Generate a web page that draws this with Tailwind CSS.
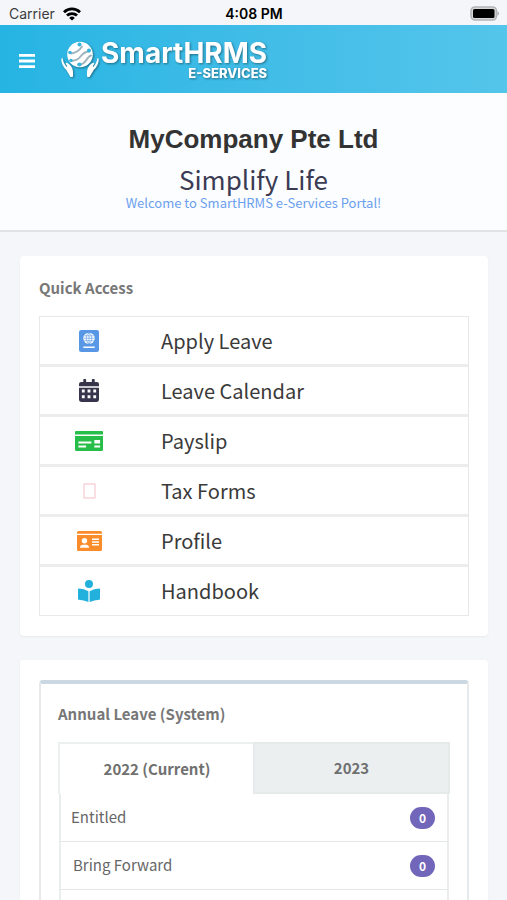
<!DOCTYPE html>
<html lang="en">
<head>
<meta charset="utf-8">
<meta name="viewport" content="width=device-width, initial-scale=1">
<title>SmartHRMS e-Services</title>
<script src="https://cdn.jsdelivr.net/npm/@tailwindcss/browser@4"></script>
</head>
<body class="bg-[#f4f6fa] font-['Noto_Sans_CJK_JP','Noto_Sans',sans-serif] text-[#666]">
<div class="h-screen overflow-hidden">
  <div class="grid h-[25px] grid-cols-3 items-center pr-2 pl-[9px] pt-[2px] font-['Inter',sans-serif] text-sm leading-5">
    <div class="flex items-center gap-2 text-[#3c3c40]">
      <span>Carrier</span>
      <svg class="h-[14px] w-[18px] text-black" viewBox="0 0 18 14" fill="none" stroke="currentColor" stroke-width="2.8" aria-hidden="true">
        <path d="M1 5.2a11.4 11.4 0 0 1 16 0"/><path d="M4 8.600a7.100 7.100 0 0 1 10 0"/><path d="M9 13.6 6.2 10.9a4 4 0 0 1 5.6 0z" fill="currentColor" stroke="none"/>
      </svg>
    </div>
    <div class="text-center font-semibold text-black">4:08 PM</div>
    <svg class="h-[15px] w-[31px] justify-self-end" viewBox="0 0 31 15" aria-hidden="true">
      <rect x="3" y="1" width="25.500" height="13" rx="4" fill="#d8d8da" stroke="#b4b4b6" stroke-width="1.600"/>
      <rect x="5" y="3" width="21.500" height="9" rx="1.500" fill="#000"/>
      <path d="M29.500 5.200q1.500 .8 1.500 2.300t-1.500 2.300z" fill="#a9a9ab"/>
    </svg>
  </div>

  <header class="flex h-[68px] items-center bg-linear-to-r from-[#25b4e3] to-[#54c5eb] pl-[19px] text-white">
    <button type="button" aria-label="Open menu" class="mt-1 w-4">
      <svg viewBox="0 0 16 14" class="w-4" fill="currentColor" aria-hidden="true"><path d="M0 0h16v2.800H0zM0 5.600h16v2.800H0zM0 11.200h16V14H0z"/></svg>
    </button>
    <a href="#" class="ml-[26px] flex items-start font-['Inter',sans-serif] font-bold drop-shadow-[1px_1px_1px_rgba(0,0,0,0.4)]">
      <svg class="mt-[2px] h-[37px] w-[38px]" viewBox="0 0 38 37" fill="#fff" aria-hidden="true">
        <circle cx="19" cy="13.500" r="12.800"/>
        <path d="M10.500 12.500Q17 11.500 21 5.500M9.500 19.500q6 1 10-4t8.500-5M17 23.500q5 .5 8-4t5-5" fill="none" stroke="#9fb4bd" stroke-width="2" stroke-linecap="round"/>
        <circle cx="18.500" cy="3.500" r="2" fill="#35b4df"/><circle cx="9" cy="11.500" r="1.800" fill="#35b4df"/><circle cx="28" cy="9.500" r="2" fill="#35b4df"/><circle cx="10" cy="19.500" r="1.700" fill="#35b4df"/><circle cx="18.500" cy="23.500" r="2" fill="#35b4df"/>
        <path d="M1.500 17q-1.500 0-1.200 2.200Q1 25 5 28.500L9.500 36h2.300q1-7-1.600-10.500-3-4-5.200-3.700-.9.800 1.200 3.200l-.4 1Q2.600 23 1.500 17z"/>
        <path d="M36.500 17q1.500 0 1.200 2.200Q37 25 33 28.500L28.500 36h-2.300q-1-7 1.600-10.500 3-4 5.200-3.700.9.800-1.200 3.200l.4 1q3.200-3 4.300-9z"/>
      </svg>
      <span class="ml-[2px] flex flex-col items-end">
        <span class="text-[28px] leading-7">SmartHRMS</span>
        <span class="text-[13px] leading-[13px] font-extrabold">E-SERVICES</span>
      </span>
    </a>
  </header>

  <section class="flex h-[139px] flex-col items-center border-b-2 border-[#dfe3e5] bg-[#fbfdfe] pt-[30px] text-center">
    <h1 class="font-['Liberation_Sans',sans-serif] text-[26px] leading-8 font-bold text-[#333]">MyCompany Pte Ltd</h1>
    <p class="mt-[8px] text-[26px] leading-8 text-[#3b3b54]">Simplify Life</p>
    <p class="text-[13px] leading-4 text-[#6b9fee]">Welcome to SmartHRMS e-Services Portal!</p>
  </section>

  <main class="flex flex-col gap-6 px-5 pt-6">
    <section class="-mr-px rounded-sm bg-white px-[19px] pt-5 pb-5 shadow-xs">
      <h2 class="mb-4 text-[15px] leading-6 font-bold text-[#777]">Quick Access</h2>
      <nav class="border border-[#e8e8e8] text-xl text-[#3a3a3a]">
        <a href="#" class="flex h-[50px] items-center border-b-3 border-[#ededed]">
          <span class="mr-[23px] flex w-[98px] justify-center"><svg class="h-[22px] w-5" viewBox="0 0 448 512" preserveAspectRatio="none" fill="#5896e6" aria-hidden="true"><rect width="448" height="512" rx="48"/><circle cx="224" cy="192" r="128" fill="#fff"/><path d="M104 192h240M224 70v244M120 135h208M120 249h208" stroke="#5896e6" stroke-width="14"/><ellipse cx="224" cy="192" rx="60" ry="122" fill="none" stroke="#5896e6" stroke-width="14"/><path d="M96 384h256v34H96z" fill="#fff"/></svg></span>
          <span>Apply Leave</span></a>
        <a href="#" class="flex h-[50px] items-center border-b-3 border-[#ededed]">
          <span class="mr-[23px] flex w-[98px] justify-center"><svg class="h-[23px] w-5" viewBox="0 0 448 512" fill="#36354c" aria-hidden="true"><path fill-rule="evenodd" d="M0 464a48 48 0 0 0 48 48h352a48 48 0 0 0 48-48V192H0zM320 236h64v64h-64zm0 128h64v64h-64zM192 236h64v64h-64zm0 128h64v64h-64zM64 236h64v64H64zm0 128h64v64H64zM400 64h-48V16a16 16 0 0 0-16-16h-32a16 16 0 0 0-16 16v48H160V16a16 16 0 0 0-16-16h-32a16 16 0 0 0-16 16v48H48a48 48 0 0 0-48 48v48h448v-48a48 48 0 0 0-48-48z"/></svg></span>
          <span>Leave Calendar</span></a>
        <a href="#" class="flex h-[50px] items-center border-b-3 border-[#ededed]">
          <span class="mr-[23px] flex w-[98px] justify-center"><svg class="h-5 w-[28px]" viewBox="0 0 29 20" preserveAspectRatio="none" fill="#27bd49" aria-hidden="true"><path fill-rule="evenodd" d="M1 0h27q1 0 1 1v2.500H0V1q0-1 1-1zM0 5h29v13.500q0 1.500-1.500 1.500h-26Q0 20 0 18.500zM3.500 10.500v2H17v-2zM20 9v3.500h6V9zM3.500 14.500v2h8v-2zM20 14.500v2h6v-2z"/></svg></span>
          <span>Payslip</span></a>
        <a href="#" class="flex h-[50px] items-center border-b-3 border-[#ededed]">
          <span class="mr-[23px] flex w-[98px] justify-center"><svg class="h-4 w-[13px]" viewBox="0 0 13 16" fill="none" stroke="#f8d3d9" stroke-width="1.500" aria-hidden="true"><rect x="1" y="1" width="11" height="14" rx=".5"/></svg></span>
          <span>Tax Forms</span></a>
        <a href="#" class="flex h-[50px] items-center border-b-3 border-[#ededed]">
          <span class="mr-[23px] flex w-[98px] justify-center"><svg class="h-5 w-[25px]" viewBox="0 0 25 20" fill="#fb8c2b" aria-hidden="true"><path d="M1.500 0h22Q25 0 25 1.500v1.300H0V1.500Q0 0 1.500 0zM0 4h25v14.500q0 1.500-1.500 1.500h-22Q0 20 0 18.500z"/><circle cx="7.500" cy="9.800" r="2.700" fill="#fff"/><path d="M3 16.700q0-3 3-3h3q3 0 3 3zM15 7.500h7v1.400h-7zM15 10.300h7v1.400h-7zM15 13.100h7v1.400h-7z" fill="#fff"/></svg></span>
          <span>Profile</span></a>
        <a href="#" class="flex h-12 items-center">
          <span class="mr-[23px] flex w-[98px] justify-center"><svg class="h-[22px] w-[22px]" viewBox="0 0 22 22" fill="#22b1dc" aria-hidden="true"><circle cx="11" cy="4" r="4"/><path d="M10.400 11.200Q6 8.500.8 8.500q-.8 0-.8.800v9.700q0 .7.800.8 5 .2 9.600 2.200zM11.600 11.200Q16 8.500 21.200 8.500q.8 0 .8.800v9.700q0 .7-.8.800-5 .2-9.600 2.200z"/></svg></span>
          <span>Handbook</span></a>
      </nav>
    </section>

    <section class="-mr-px rounded-sm bg-white px-[19px] pt-5 shadow-xs">
      <div class="rounded-sm border-2 border-t-4 border-[#e6eaec] border-t-[#cbd8e2] px-[17px] pt-[18px] pb-5">
        <h2 class="mb-4 text-[15px] leading-6 font-bold text-[#777]">Annual Leave (System)</h2>
        <div class="grid grid-cols-2 text-[15px] font-bold text-[#707070]" role="tablist">
          <button type="button" role="tab" aria-selected="true" class="h-[52px] border-t-2 border-l-2 border-[#edf0f0]">2022 (Current)</button>
          <button type="button" role="tab" aria-selected="false" class="-ml-px h-[52px] border-2 border-[#e4ebea] bg-[#ebeff0]">2023</button>
        </div>
        <dl class="mx-px border-x-2 border-[#e9edee] text-[15px]">
          <div class="flex h-12 items-center justify-between border-b border-[#e4e8e8] pr-3 pl-[10px]"><dt>Entitled</dt><dd class="flex h-[22px] w-[25px] items-center justify-center rounded-full bg-[#7266ba] text-xs font-bold text-white">0</dd></div>
          <div class="flex h-12 items-center justify-between border-b border-[#e4e8e8] pr-3 pl-3"><dt>Bring Forward</dt><dd class="flex h-[22px] w-[25px] items-center justify-center rounded-full bg-[#7266ba] text-xs font-bold text-white">0</dd></div>
          <div class="h-12"></div>
        </dl>
      </div>
    </section>
  </main>
</div>
</body>
</html>
